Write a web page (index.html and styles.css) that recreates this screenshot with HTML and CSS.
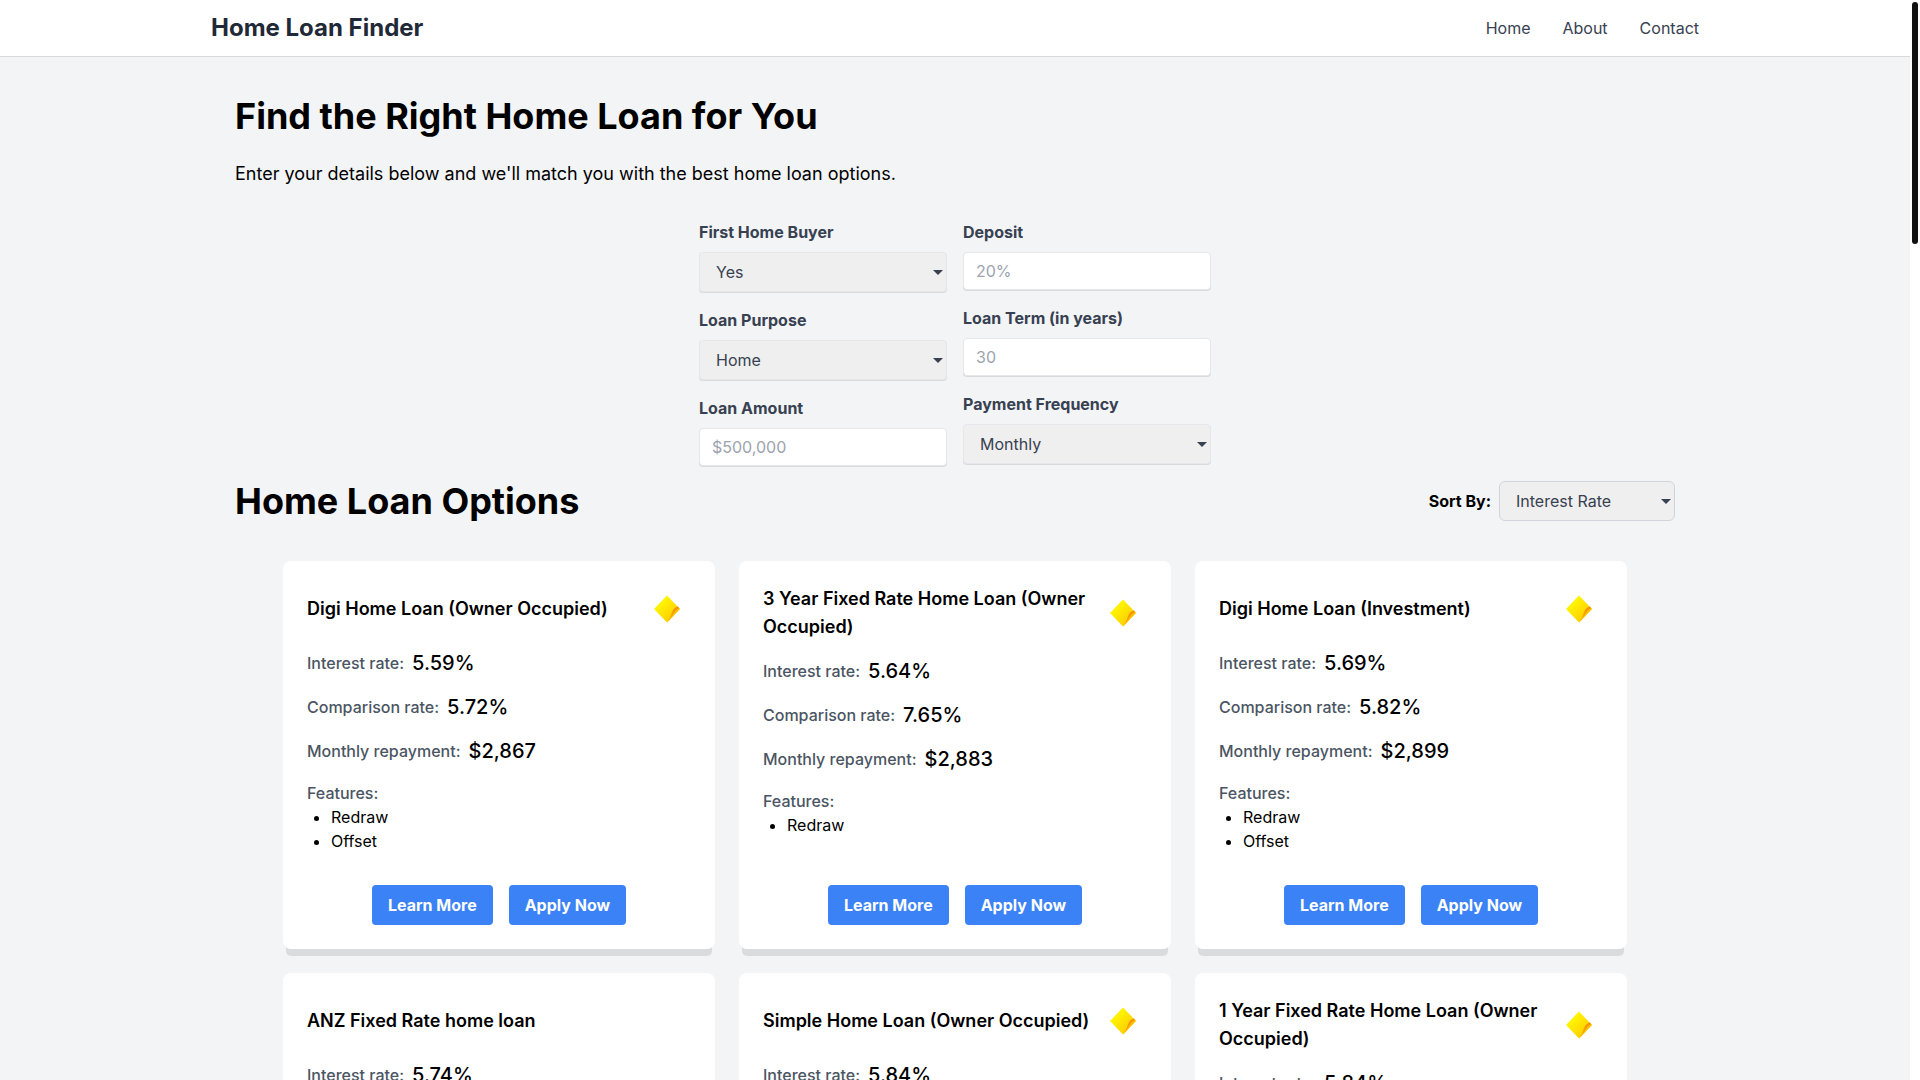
FILE: index.html
```html
<!DOCTYPE html>
<html lang="en">
<head>
  <meta charset="UTF-8" />
  <meta name="viewport" content="width=device-width, initial-scale=1.0" />
  <title>Home Loan Finder</title>
  <link rel="stylesheet" href="styles.css">
</head>
<body>

  <!-- shared bank logo -->
  <svg class="sprite" width="0" height="0" aria-hidden="true">
    <defs>
      <linearGradient id="logoYellow" x1="0" y1="0" x2="1" y2="1">
        <stop offset="0.3" stop-color="#fff200" />
        <stop offset="0.8" stop-color="#ffcc00" />
      </linearGradient>
      <linearGradient id="logoFold" x1="1" y1="0" x2="0" y2="1">
        <stop offset="0" stop-color="#f58a00" />
        <stop offset="1" stop-color="#ffb400" />
      </linearGradient>
      <symbol id="bankLogo" viewBox="0 0 48 48">
        <path fill="url(#logoYellow)" d="M24 10.5 37 24 24 37.500 11 24z" />
        <path fill="#ffc600" d="M37 24 24 37.500 27.500 32 31 26.500 35.500 22.500z" />
        <path fill="url(#logoFold)" d="M35 21.500 32.500 22.500C29.500 24.500 28.500 28 27.500 31.500L24.500 37 29 31.500C30.500 28 32.500 25 36 22.900z" />
      </symbol>
    </defs>
  </svg>

  <header class="header">
    <div class="header-inner">
      <a class="brand" href="#">Home Loan Finder</a>
      <nav class="nav">
        <a href="#">Home</a>
        <a href="#">About</a>
        <a href="#">Contact</a>
      </nav>
    </div>
  </header>

  <main class="main">
    <h1>Find the Right Home Loan for You</h1>
    <p class="intro">Enter your details below and we'll match you with the best home loan options.</p>

    <form class="loan-form">
      <div class="form-column">
        <div class="field">
          <label for="firstHomeBuyer">First Home Buyer</label>
          <select id="firstHomeBuyer">
            <option>Yes</option>
            <option>No</option>
          </select>
        </div>
        <div class="field">
          <label for="loanPurpose">Loan Purpose</label>
          <select id="loanPurpose">
            <option>Home</option>
            <option>Investment</option>
          </select>
        </div>
        <div class="field">
          <label for="loanAmount">Loan Amount</label>
          <input type="text" id="loanAmount" placeholder="$500,000">
        </div>
      </div>
      <div class="form-column">
        <div class="field">
          <label for="deposit">Deposit</label>
          <input type="text" id="deposit" placeholder="20%">
        </div>
        <div class="field">
          <label for="loanTerm">Loan Term (in years)</label>
          <input type="text" id="loanTerm" placeholder="30">
        </div>
        <div class="field">
          <label for="paymentFrequency">Payment Frequency</label>
          <select id="paymentFrequency">
            <option>Monthly</option>
            <option>Fortnightly</option>
            <option>Weekly</option>
          </select>
        </div>
      </div>
    </form>

    <div class="options-bar">
      <h2>Home Loan Options</h2>
      <div class="sort">
        <label for="sortBy">Sort By:</label>
        <select id="sortBy">
          <option>Interest Rate</option>
          <option>Comparison Rate</option>
        </select>
      </div>
    </div>

    <div class="cards">
      <div class="card">
        <div class="card-header">
          <h3>Digi Home Loan (Owner Occupied)</h3>
          <svg class="logo" role="img" aria-label="Bank logo"><use href="#bankLogo" /></svg>
        </div>
        <p class="rate"><span>Interest rate:</span> <strong>5.59%</strong></p>
        <p class="rate"><span>Comparison rate:</span> <strong>5.72%</strong></p>
        <p class="rate"><span>Monthly repayment:</span> <strong>$2,867</strong></p>
        <div class="features">
          <h4>Features:</h4>
          <ul>
            <li>Redraw</li>
            <li>Offset</li>
          </ul>
        </div>
        <div class="card-buttons">
          <button type="button">Learn More</button>
          <button type="button">Apply Now</button>
        </div>
      </div>

      <div class="card">
        <div class="card-header">
          <h3>3 Year Fixed Rate Home Loan (Owner Occupied)</h3>
          <svg class="logo" role="img" aria-label="Bank logo"><use href="#bankLogo" /></svg>
        </div>
        <p class="rate"><span>Interest rate:</span> <strong>5.64%</strong></p>
        <p class="rate"><span>Comparison rate:</span> <strong>7.65%</strong></p>
        <p class="rate"><span>Monthly repayment:</span> <strong>$2,883</strong></p>
        <div class="features">
          <h4>Features:</h4>
          <ul>
            <li>Redraw</li>
          </ul>
        </div>
        <div class="card-buttons">
          <button type="button">Learn More</button>
          <button type="button">Apply Now</button>
        </div>
      </div>

      <div class="card">
        <div class="card-header">
          <h3>Digi Home Loan (Investment)</h3>
          <svg class="logo" role="img" aria-label="Bank logo"><use href="#bankLogo" /></svg>
        </div>
        <p class="rate"><span>Interest rate:</span> <strong>5.69%</strong></p>
        <p class="rate"><span>Comparison rate:</span> <strong>5.82%</strong></p>
        <p class="rate"><span>Monthly repayment:</span> <strong>$2,899</strong></p>
        <div class="features">
          <h4>Features:</h4>
          <ul>
            <li>Redraw</li>
            <li>Offset</li>
          </ul>
        </div>
        <div class="card-buttons">
          <button type="button">Learn More</button>
          <button type="button">Apply Now</button>
        </div>
      </div>

      <div class="card">
        <div class="card-header">
          <h3>ANZ Fixed Rate home loan</h3>
        </div>
        <p class="rate"><span>Interest rate:</span> <strong>5.74%</strong></p>
      </div>

      <div class="card">
        <div class="card-header">
          <h3>Simple Home Loan (Owner Occupied)</h3>
          <svg class="logo" role="img" aria-label="Bank logo"><use href="#bankLogo" /></svg>
        </div>
        <p class="rate"><span>Interest rate:</span> <strong>5.84%</strong></p>
      </div>

      <div class="card">
        <div class="card-header">
          <h3>1 Year Fixed Rate Home Loan (Owner Occupied)</h3>
          <svg class="logo" role="img" aria-label="Bank logo"><use href="#bankLogo" /></svg>
        </div>
        <p class="rate"><span>Interest rate:</span> <strong>5.84%</strong></p>
      </div>
    </div>
  </main>

  <div class="scrollbar" aria-hidden="true"><div class="scrollbar-thumb"></div></div>

</body>
</html>
```

FILE: styles.css
```css
* {
  box-sizing: border-box;
}
body {
  font-family: Inter, 'Open Sans', sans-serif;
  font-size: 16px;
  line-height: 24px;
  margin: 0;
  padding-right: 10px;
  height: 100vh;
  overflow: hidden;
  background: #f3f4f6;
  color: #000;
}
h1, h2, h3, h4, p, ul {
  margin: 0;
}
.sprite {
  position: absolute;
}

/* header */
.header {
  background: white;
  box-shadow: 0 1px 0 #d9dadb;
}
.header-inner {
  max-width: 1536px;
  margin: 0 auto;
  padding: 12px 24px;
  display: flex;
  justify-content: space-between;
  align-items: center;
}
.brand {
  color: #1f2937;
  font-size: 24px;
  line-height: 32px;
  font-weight: 700;
  text-decoration: none;
}
.nav {
  display: flex;
  gap: 32px;
}
.nav a {
  color: #374151;
  text-decoration: none;
}

/* page */
.main {
  max-width: 1536px;
  margin: 0 auto;
  padding: 40px 48px;
}
h1, h2 {
  font-size: 36px;
  line-height: 40px;
  font-weight: 700;
}
.intro {
  margin: 24px 0 32px;
  font-size: 18px;
  line-height: 28px;
}

/* form */
.loan-form {
  max-width: 512px;
  margin: 0 auto;
  display: grid;
  grid-template-columns: 1fr 1fr;
  gap: 16px;
}
.form-column {
  display: flex;
  flex-direction: column;
  gap: 16px;
}
.field label {
  display: block;
  margin-bottom: 8px;
  color: #374151;
  font-weight: 700;
}
input, select {
  display: block;
  width: 100%;
  font-family: inherit;
  font-size: 16px;
  line-height: 20px;
  color: #374151;
  border: 1px solid #e5e7eb;
  border-radius: 4px;
  box-shadow: 0 1px 0 #d9dadb;
}
input {
  height: 38px;
  padding: 8px 12px;
  background: white;
}
input::placeholder {
  color: #9ca3af;
}
select {
  height: 40px;
  padding: 8px 24px 8px 16px;
  appearance: none;
  background: #efefef url("data:image/svg+xml,%3Csvg xmlns='http://www.w3.org/2000/svg' width='10' height='5'%3E%3Cpath d='M0 0h10L5 5z' fill='%23374151'/%3E%3C/svg%3E") no-repeat right 3px center;
}

/* options */
.options-bar {
  margin-top: 15px;
  display: flex;
  justify-content: space-between;
  align-items: center;
}
.sort {
  display: flex;
  align-items: center;
  gap: 8px;
}
.sort label {
  font-weight: 700;
}
.sort select {
  width: 176px;
  border-color: #d1d5db;
  border-radius: 6px;
  box-shadow: none;
}
.cards {
  padding: 40px 48px;
  display: grid;
  grid-template-columns: repeat(3, 1fr);
  gap: 24px;
}
.card {
  display: flex;
  flex-direction: column;
  gap: 16px;
  padding: 24px;
  background: white;
  border-radius: 8px;
  box-shadow: 0 10px 0 -3px rgba(0,0,0,0.1);
}
.card-header {
  display: flex;
  justify-content: space-between;
  align-items: center;
  min-height: 48px;
}
.card-header h3 {
  font-size: 18px;
  line-height: 28px;
  font-weight: 600;
}
.logo {
  flex: none;
  width: 48px;
  height: 48px;
}
.rate {
  display: flex;
  align-items: center;
  gap: 8px;
  line-height: 28px;
}
.rate span, .features h4 {
  color: #4b5563;
  font-size: 16px;
  font-weight: 500;
}
.rate strong {
  font-size: 20px;
  font-weight: 500;
}
.features ul {
  padding-left: 24px;
}
.card-buttons {
  margin-top: auto;
  padding-top: 16px;
  display: flex;
  justify-content: center;
  gap: 16px;
}
button {
  padding: 8px 16px;
  background: #3b82f6;
  color: white;
  font-family: inherit;
  font-size: 16px;
  line-height: 24px;
  font-weight: 700;
  border: none;
  border-radius: 4px;
  cursor: pointer;
}
button:hover {
  background: #1d4ed8;
}

/* scrollbar */
.scrollbar {
  position: fixed;
  top: 0;
  right: 0;
  bottom: 0;
  width: 10px;
  padding: 2px;
  background: white;
}
.scrollbar-thumb {
  height: 242px;
  border-radius: 3px;
  background: #111;
}

@media (max-width: 1200px) {
  .cards {
    grid-template-columns: 1fr 1fr;
    padding: 40px 0;
  }
}
@media (max-width: 700px) {
  .cards, .loan-form {
    grid-template-columns: 1fr;
  }
}
```
